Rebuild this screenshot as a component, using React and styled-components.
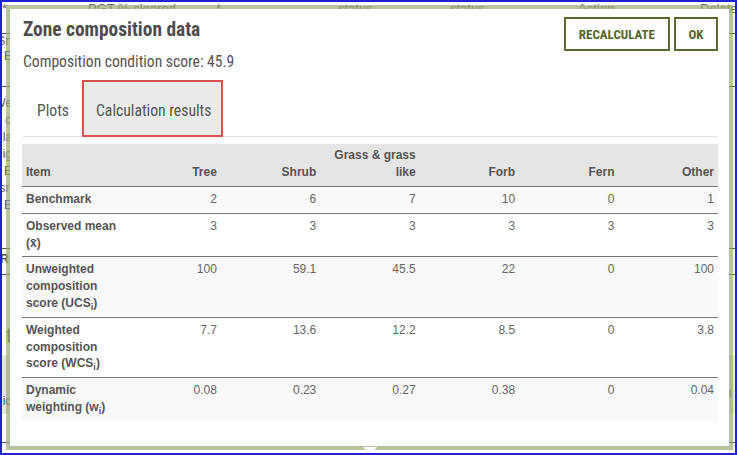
import React from "react";
import styled, { createGlobalStyle } from "styled-components";

const GlobalStyle = createGlobalStyle`
  html, body {
    margin: 0;
    padding: 0;
    background: #fff;
  }
  body {
    font-family: "Liberation Sans", Arial, sans-serif;
  }
`;

const Frame = styled.div`
  position: relative;
  width: 737px;
  height: 455px;
  box-sizing: border-box;
  border: 2px solid #1f22d4;
  overflow: hidden;
  background: #fff;
`;

/* ---------- page behind the dialog ---------- */

const BgPage = styled.div`
  display: flex;
  flex-direction: column;
  color: #555;
  font-size: 12px;
`;

const BgHeader = styled.div`
  display: grid;
  grid-template-columns: 86px 128px 122px 112px 128px 122px 1fr;
  height: 31px;
  border-bottom: 1px solid #555;
  font-size: 13px;
  line-height: 14px;
  color: #666;
  white-space: nowrap;
`;

const BgRow = styled.div`
  display: flex;
  justify-content: space-between;
  height: ${(p) => p.$h}px;
  border-bottom: 1px solid ${(p) => (p.$line ? "#555" : "transparent")};
  background: ${(p) => (p.$shade ? "#e6e6e6" : "transparent")};
  box-sizing: border-box;
`;

const BgCell = styled.div`
  width: 10px;
  overflow: hidden;
  display: flex;
  flex-direction: column;
  align-items: ${(p) => (p.$right ? "flex-start" : "flex-end")};
  padding-top: ${(p) => p.$top || 0}px;
  line-height: ${(p) => p.$lh || 17}px;
  font-size: ${(p) => p.$size || 12}px;
  white-space: nowrap;
`;

const BgText = styled.span`
  color: ${(p) => (p.$link ? "#1f4fd0" : "#555")};
  font-weight: ${(p) => (p.$bold ? 700 : 400)};
`;

/* ---------- dialog ---------- */

const Dialog = styled.div`
  position: absolute;
  left: 4px;
  top: 3px;
  width: 727px;
  height: 445px;
  box-sizing: border-box;
  border: 4px solid rgba(150, 168, 112, 0.68);
  background: #fff;
  background-clip: padding-box;
  padding: 8px 11px 0 13px;
  font-family: "Roboto Condensed", Roboto, "Liberation Sans", sans-serif;
  font-stretch: condensed;

  &::after {
    content: "";
    position: absolute;
    left: 353px;
    bottom: -9px;
    border-left: 7px solid transparent;
    border-right: 7px solid transparent;
    border-top: 8px solid #fff;
  }
`;

const Header = styled.div`
  display: flex;
  justify-content: space-between;
  align-items: flex-start;
`;

const Title = styled.h2`
  margin: 2px 0 0;
  font-size: 19.4px;
  line-height: 22px;
  font-weight: 700;
  color: #4d4d4d;
`;

const Score = styled.div`
  margin-top: 11px;
  font-size: 15.6px;
  line-height: 20px;
  color: #555;
`;

const Actions = styled.div`
  display: flex;
  gap: 4px;
`;

const Button = styled.button`
  height: 34px;
  min-width: ${(p) => (p.$narrow ? "44px" : "auto")};
  padding: 0 ${(p) => (p.$narrow ? 0 : 13)}px;
  box-sizing: border-box;
  border: 2px solid #5b6a2e;
  background: #fff;
  color: #56652a;
  font-family: inherit;
  font-stretch: condensed;
  font-size: 13px;
  font-weight: 700;
  cursor: pointer;
`;

const TabBar = styled.div`
  display: flex;
  gap: 1px;
  margin-top: 8px;
  border-bottom: 1px solid #e2e2e2;
`;

const Tab = styled.div`
  padding: 19px 10px 14px 12px;
  border: 2px solid ${(p) => (p.$active ? "#d9534f" : "transparent")};
  background: ${(p) => (p.$active ? "#ebebeb" : "transparent")};
  font-size: 15.7px;
  line-height: 20px;
  color: #555;
  margin-bottom: -1px;
`;

const Table = styled.table`
  width: 696px;
  margin: 7px 0 0 -1px;
  border-collapse: collapse;
  table-layout: fixed;
  font-family: "Liberation Sans", Arial, sans-serif;
  font-size: 12px;
  line-height: 16.8px;
  color: #5a5a5a;

  sub {
    font-size: 9px;
    line-height: 0;
  }
`;

const Th = styled.th`
  padding: 3px 4px 5px;
  background: #e5e5e5;
  text-align: ${(p) => (p.$left ? "left" : "right")};
  vertical-align: bottom;
  font-weight: 700;
  color: #555;
  line-height: 17px;
`;

const Tr = styled.tr`
  background: ${(p) => (p.$stripe ? "#f9f9f9" : "#fff")};
  border-top: 1px solid #777;
`;

const Td = styled.td`
  padding: 4px 4px 5px;
  vertical-align: top;
  text-align: ${(p) => (p.$label ? "left" : "right")};
  font-weight: ${(p) => (p.$label ? 700 : 400)};
  color: ${(p) => (p.$label ? "#555" : "#666")};
`;

const columns = ["Tree", "Shrub", "Grass & grass like", "Forb", "Fern", "Other"];

const rows = [
  { label: "Benchmark", values: [2, 6, 7, 10, 0, 1] },
  { label: <>Observed mean (x̄)</>, values: [3, 3, 3, 3, 3, 3] },
  {
    label: <>Unweighted composition score (UCS<sub>i</sub>)</>,
    values: [100, 59.1, 45.5, 22, 0, 100],
  },
  {
    label: <>Weighted composition score (WCS<sub>i</sub>)</>,
    values: [7.7, 13.6, 12.2, 8.5, 0, 3.8],
  },
  {
    label: <>Dynamic weighting (w<sub>i</sub>)</>,
    values: [0.08, 0.23, 0.27, 0.38, 0, 0.04],
  },
];

const Background = () => (
  <BgPage>
    <BgHeader>
      <span>*</span>
      <span>PGT % cleared</span>
      <span>*</span>
      <span>status</span>
      <span>status</span>
      <span>Action</span>
      <span>Delete</span>
    </BgHeader>
    <BgRow $h={53} $line>
      <BgCell $lh={15}>
        <BgText>Sri</BgText>
        <BgText $link>n E</BgText>
      </BgCell>
      <BgCell $right />
    </BgRow>
    <BgRow $h={162} $line>
      <BgCell $top={8}>
        <BgText>We</BgText>
        <BgText>o</BgText>
        <BgText>la</BgText>
        <BgText>ig</BgText>
        <BgText>s E</BgText>
        <BgText>sri</BgText>
        <BgText $link>n E</BgText>
      </BgCell>
      <BgCell $right />
    </BgRow>
    <BgRow $h={26} $line>
      <BgCell $top={2}>
        <BgText $bold>R.</BgText>
      </BgCell>
      <BgCell $right />
    </BgRow>
    <BgRow $h={80}>
      <BgCell $top={48} $size={22} $lh={26}>
        <BgText>t</BgText>
      </BgCell>
      <BgCell $right />
    </BgRow>
    <BgRow $h={59} $shade>
      <BgCell $top={38}>
        <BgText>io</BgText>
      </BgCell>
      <BgCell $right $top={30}>
        <BgText>n</BgText>
      </BgCell>
    </BgRow>
    <BgRow $h={29} $line>
      <BgCell />
      <BgCell $right />
    </BgRow>
  </BgPage>
);

export default function App() {
  return (
    <>
      <GlobalStyle />
      <Frame>
        <Background />
        <Dialog>
          <Header>
            <div>
              <Title>Zone composition data</Title>
              <Score>Composition condition score: 45.9</Score>
            </div>
            <Actions>
              <Button>RECALCULATE</Button>
              <Button $narrow>OK</Button>
            </Actions>
          </Header>
          <TabBar>
            <Tab>Plots</Tab>
            <Tab $active>Calculation results</Tab>
          </TabBar>
          <Table>
            <thead>
              <tr>
                <Th $left>Item</Th>
                {columns.map((c) => (
                  <Th key={c}>{c}</Th>
                ))}
              </tr>
            </thead>
            <tbody>
              {rows.map((r, i) => (
                <Tr key={i} $stripe={i % 2 === 0}>
                  <Td $label>{r.label}</Td>
                  {r.values.map((v, j) => (
                    <Td key={j}>{v}</Td>
                  ))}
                </Tr>
              ))}
            </tbody>
          </Table>
        </Dialog>
      </Frame>
    </>
  );
}
